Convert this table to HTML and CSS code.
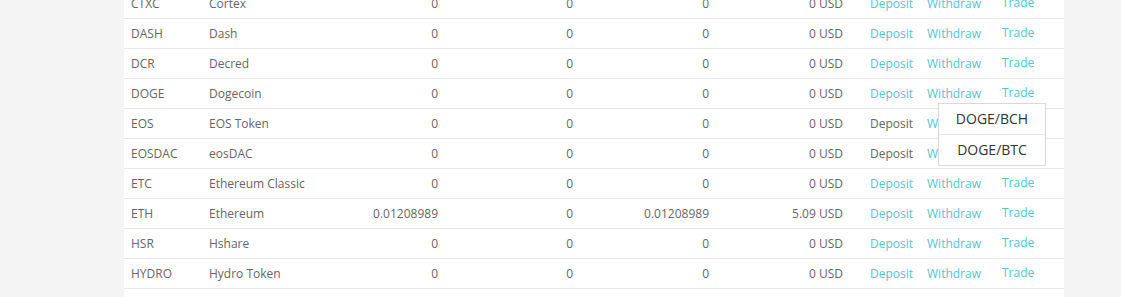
FILE: index.html
```html
<!DOCTYPE html>
<html>
<head>
<meta charset="utf-8">
<link rel="stylesheet" href="styles.css">
</head>
<body>
<div class="page">
  <div class="card">
    <table class="balances">
      <colgroup>
        <col class="c-code"><col class="c-name"><col class="c-num1"><col class="c-num2"><col class="c-num3"><col class="c-usd"><col class="c-act">
      </colgroup>
      <tbody>
        <tr><td>CTXC</td><td>Cortex</td><td class="num">0</td><td class="num">0</td><td class="num">0</td><td class="num">0 USD</td><td><div class="acts"><a class="link">Deposit</a><a class="link w">Withdraw</a><span class="trade"><a class="link">Trade</a></span></div></td></tr>
        <tr><td>DASH</td><td>Dash</td><td class="num">0</td><td class="num">0</td><td class="num">0</td><td class="num">0 USD</td><td><div class="acts"><a class="link">Deposit</a><a class="link w">Withdraw</a><span class="trade"><a class="link">Trade</a></span></div></td></tr>
        <tr><td>DCR</td><td>Decred</td><td class="num">0</td><td class="num">0</td><td class="num">0</td><td class="num">0 USD</td><td><div class="acts"><a class="link">Deposit</a><a class="link w">Withdraw</a><span class="trade"><a class="link">Trade</a></span></div></td></tr>
        <tr><td>DOGE</td><td>Dogecoin</td><td class="num">0</td><td class="num">0</td><td class="num">0</td><td class="num">0 USD</td><td><div class="acts"><a class="link">Deposit</a><a class="link w">Withdraw</a><span class="trade"><a class="link">Trade</a>
          <ul class="menu"><li>DOGE/BCH</li><li>DOGE/BTC</li></ul></span></div></td></tr>
        <tr><td>EOS</td><td>EOS Token</td><td class="num">0</td><td class="num">0</td><td class="num">0</td><td class="num">0 USD</td><td><div class="acts"><span class="off">Deposit</span><a class="link w">Withdraw</a><span class="trade"><a class="link">Trade</a></span></div></td></tr>
        <tr><td>EOSDAC</td><td>eosDAC</td><td class="num">0</td><td class="num">0</td><td class="num">0</td><td class="num">0 USD</td><td><div class="acts"><span class="off">Deposit</span><a class="link w">Withdraw</a><span class="trade"><a class="link">Trade</a></span></div></td></tr>
        <tr><td>ETC</td><td>Ethereum Classic</td><td class="num">0</td><td class="num">0</td><td class="num">0</td><td class="num">0 USD</td><td><div class="acts"><a class="link">Deposit</a><a class="link w">Withdraw</a><span class="trade"><a class="link">Trade</a></span></div></td></tr>
        <tr><td>ETH</td><td>Ethereum</td><td class="num">0.01208989</td><td class="num">0</td><td class="num">0.01208989</td><td class="num">5.09 USD</td><td><div class="acts"><a class="link">Deposit</a><a class="link w">Withdraw</a><span class="trade"><a class="link">Trade</a></span></div></td></tr>
        <tr><td>HSR</td><td>Hshare</td><td class="num">0</td><td class="num">0</td><td class="num">0</td><td class="num">0 USD</td><td><div class="acts"><a class="link">Deposit</a><a class="link w">Withdraw</a><span class="trade"><a class="link">Trade</a></span></div></td></tr>
        <tr><td>HYDRO</td><td>Hydro Token</td><td class="num">0</td><td class="num">0</td><td class="num">0</td><td class="num">0 USD</td><td><div class="acts"><a class="link">Deposit</a><a class="link w">Withdraw</a><span class="trade"><a class="link">Trade</a></span></div></td></tr>
        <tr class="blank"><td></td><td></td><td></td><td></td><td></td><td></td><td></td></tr>
      </tbody>
    </table>
  </div>
</div>
</body>
</html>
```
FILE: styles.css
```css
html, body {
  margin: 0;
  padding: 0;
  background: #f4f4f4;
  overflow: hidden;
}
body {
  font-family: "Open Sans", "Noto Sans", sans-serif;
  font-size: 12px;
  color: #666;
}
.page {
  padding-left: 124px;
  width: 940px;
  margin-top: -11px;
}
.card {
  background: #fff;
}
.balances {
  width: 940px;
  border-collapse: collapse;
  table-layout: fixed;
}
.c-code { width: 78px; }
.c-name { width: 130px; }
.c-num1 { width: 113px; }
.c-num2 { width: 135px; }
.c-num3 { width: 136px; }
.c-usd { width: 134px; }
.c-act { width: 214px; }
.balances td {
  height: 29px;
  padding: 0 7px;
  border-bottom: 1px solid #e8e8e8;
  white-space: nowrap;
  vertical-align: middle;
}
.balances td.num {
  text-align: right;
}
.balances tr.blank td {
  height: 40px;
  border-bottom: none;
}
.acts {
  display: flex;
  align-items: center;
  padding-left: 13px;
}
.link {
  color: #55c4cc;
  text-decoration: none;
}
.off {
  color: #666;
}
.w {
  margin-left: 14px;
}
.trade {
  position: relative;
  margin-left: 21px;
  padding-bottom: 3px;
}
.menu {
  position: absolute;
  left: -64px;
  top: 19px;
  width: 106px;
  margin: 0;
  padding: 0;
  list-style: none;
  background: #fff;
  border: 1px solid #d9d9d9;
  font-size: 14px;
  color: #333;
  z-index: 2;
}
.menu li {
  height: 30px;
  line-height: 30px;
  text-align: center;
}
.menu li + li {
  border-top: 1px solid #e6e6e6;
}
```
